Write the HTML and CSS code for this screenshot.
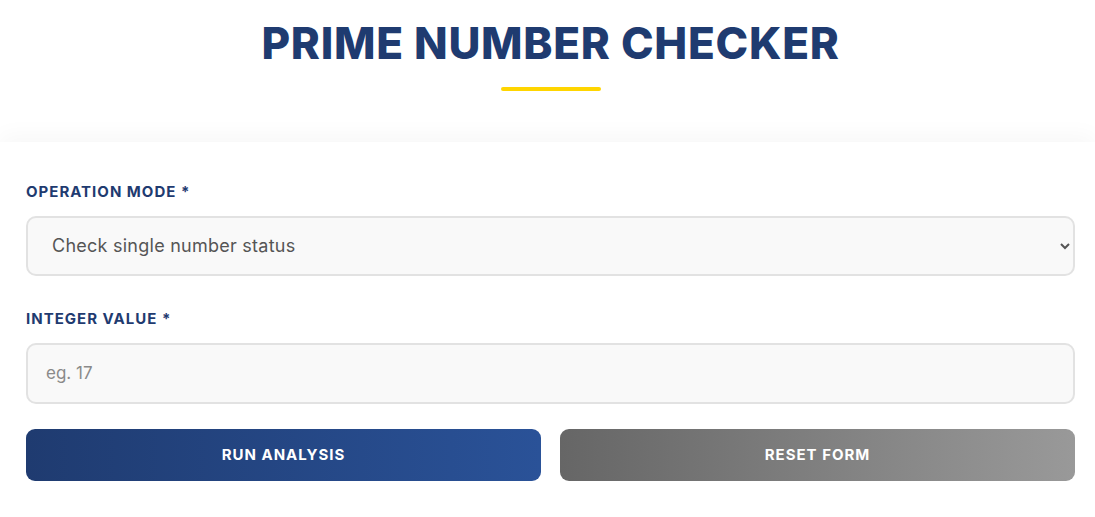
FILE: index.html
```html
<!DOCTYPE html>
<html lang="en">
<head>
<meta charset="utf-8">
<title>Prime Number Checker</title>
<link rel="stylesheet" href="styles.css">
</head>
<body>
<header class="hero">
  <h1 class="title">PRIME NUMBER CHECKER</h1>
  <div class="title-bar"></div>
</header>
<main class="card">
  <form class="form">
    <div class="field">
      <label class="label" for="mode">OPERATION MODE *</label>
      <select id="mode" class="control select">
        <option>Check single number status</option>
      </select>
    </div>
    <div class="field">
      <label class="label" for="value">INTEGER VALUE *</label>
      <input id="value" class="control input" type="text" placeholder="eg. 17">
    </div>
    <div class="actions">
      <button type="button" class="btn btn-run">RUN ANALYSIS</button>
      <button type="button" class="btn btn-reset">RESET FORM</button>
    </div>
  </form>
</main>
</body>
</html>
```
FILE: styles.css
```css
* { box-sizing: border-box; }
html, body {
  margin: 0;
  padding: 0;
  background: #ffffff;
  font-family: "Inter", "Open Sans", sans-serif;
  overflow: hidden;
}
.hero {
  display: flex;
  flex-direction: column;
  align-items: center;
  padding: 17px 20px 51px 26px;
  background: #ffffff;
}
.title {
  margin: 0;
  font-size: 44px;
  line-height: 1.2;
  font-weight: 800;
  color: #1f3b70;
  letter-spacing: 0.7px;
}
.title-bar {
  margin-top: 17px;
  width: 100px;
  height: 4px;
  border-radius: 2px;
  background: #ffd500;
}
.card {
  background: #ffffff;
  box-shadow: 0 -6px 22px rgba(0, 0, 0, 0.035);
  padding: 40px 20px 40px 26px;
  min-height: 400px;
  position: relative;
}
.form {
  display: flex;
  flex-direction: column;
}
.field {
  display: flex;
  flex-direction: column;
  margin-bottom: 33px;
}
.field + .field { margin-bottom: 25px; }
.label {
  font-size: 15px;
  line-height: 20px;
  font-weight: 700;
  letter-spacing: 1px;
  color: #1f3b70;
  margin-bottom: 14px;
}
.control {
  width: 100%;
  border: 2px solid #e2e2e2;
  border-radius: 10px;
  background: #f9f9f9;
  font-family: "Inter", "Open Sans", sans-serif;
  font-size: 17px;
  color: #555555;
  padding: 0 18px;
  outline: none;
}
.select {
  height: 60px;
  padding-left: 20px;
  padding-right: 22px;
  font-size: 18px;
  letter-spacing: 0.25px;
}
.input { height: 61px; }
.input::placeholder { color: #8a8a8a; }
.actions {
  display: grid;
  grid-template-columns: 1fr 1fr;
  gap: 19px;
}
.btn {
  height: 52px;
  border: none;
  border-radius: 9px;
  color: #ffffff;
  font-family: "Inter", "Open Sans", sans-serif;
  font-size: 15px;
  font-weight: 700;
  letter-spacing: 1px;
}
.btn-run { background: linear-gradient(90deg, #1f3b70, #2a5298); }
.btn-reset { background: linear-gradient(90deg, #666666, #999999); }
```
